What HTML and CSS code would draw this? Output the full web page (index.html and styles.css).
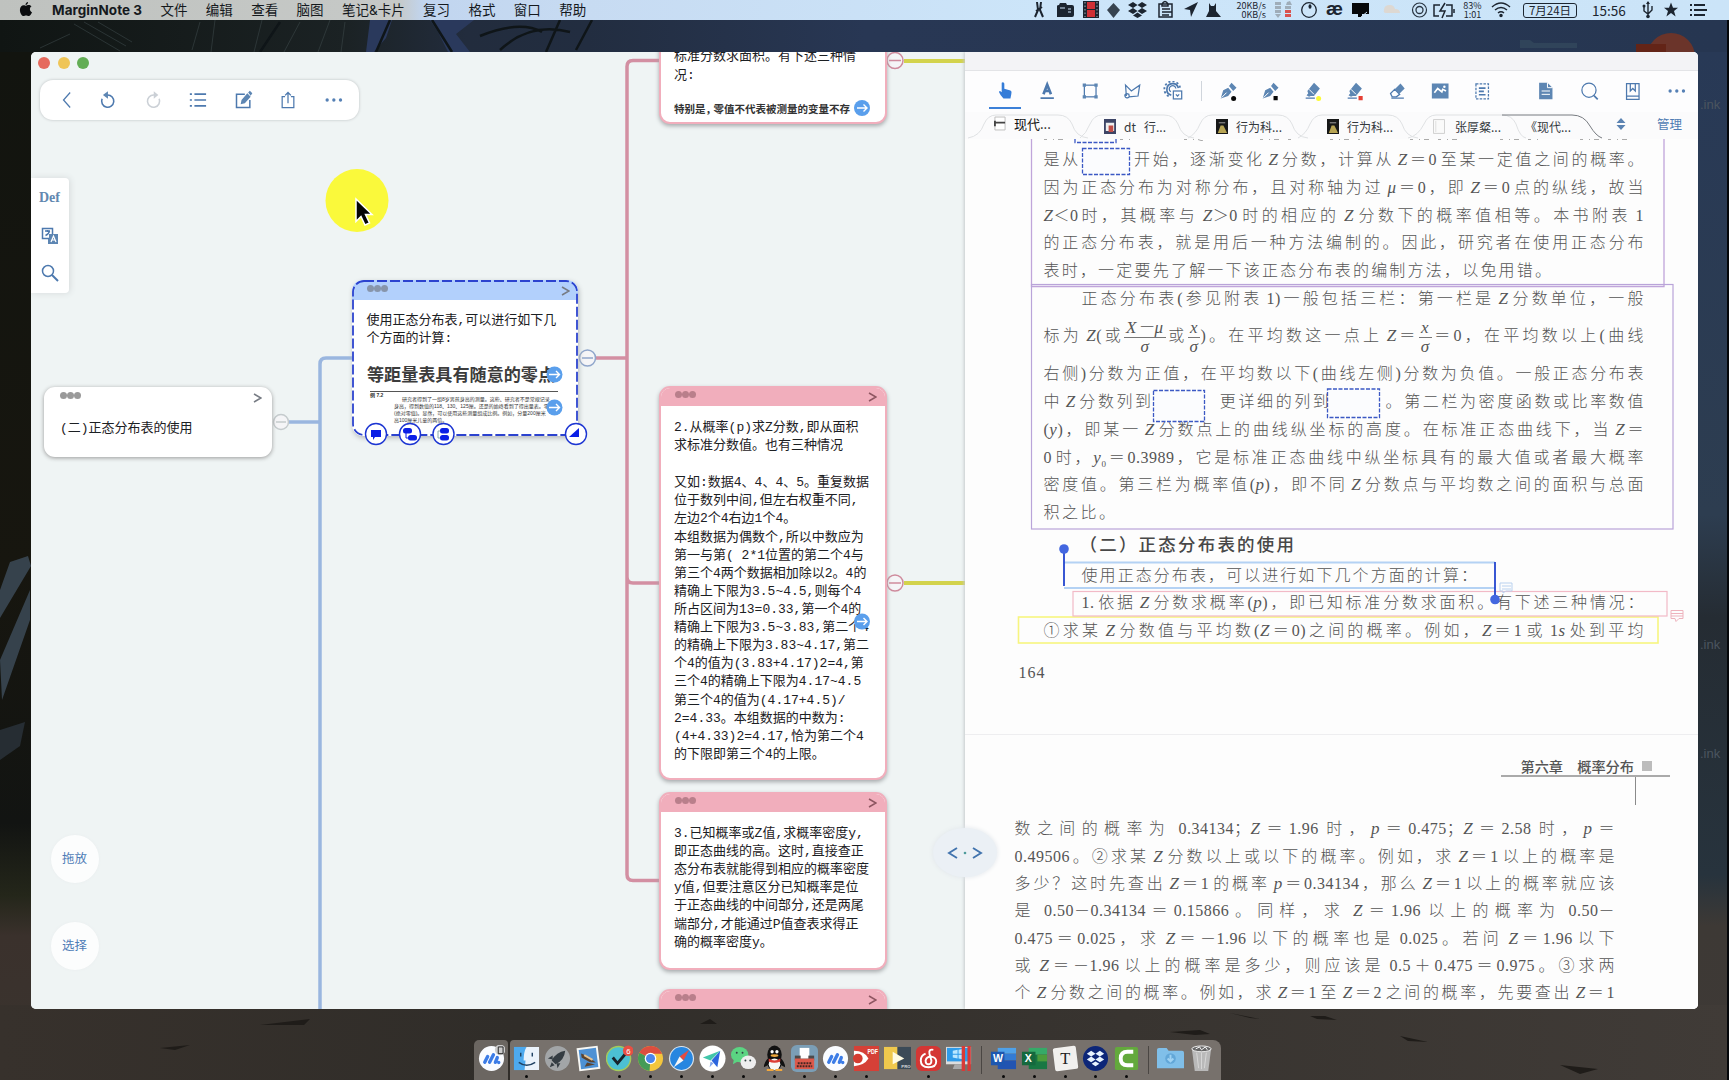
FILE: index.html
```html
<!DOCTYPE html>
<html lang="zh-CN">
<head>
<meta charset="utf-8">
<title>MarginNote 3</title>
<link rel="stylesheet" href="styles.css">
</head>
<body>
<div class="desktop">
<svg class="wallpaper" viewBox="0 0 1729 1080" aria-hidden="true">
  <defs>
    <linearGradient id="sky" x1="0" x2="1"><stop offset="0" stop-color="#101513"/><stop offset=".2" stop-color="#1b2224"/><stop offset=".27" stop-color="#222c3d"/><stop offset=".34" stop-color="#222d40"/><stop offset=".5" stop-color="#283754"/><stop offset="1" stop-color="#263651"/></linearGradient>
    <linearGradient id="side" x1="0" y1="0" x2="0" y2="1"><stop offset="0" stop-color="#283956"/><stop offset=".45" stop-color="#2d3d50"/><stop offset=".55" stop-color="#252c33"/><stop offset=".8" stop-color="#27333d"/><stop offset=".85" stop-color="#3d3935"/><stop offset="1" stop-color="#3e3936"/></linearGradient>
    <linearGradient id="leftside" x1="0" y1="0" x2="0" y2="1"><stop offset="0" stop-color="#12140f"/><stop offset=".5" stop-color="#17160f"/><stop offset=".75" stop-color="#121412"/><stop offset=".82" stop-color="#24261a"/><stop offset=".86" stop-color="#3a312c"/><stop offset="1" stop-color="#3a342f"/></linearGradient>
    <linearGradient id="sand" x1="0" x2="1"><stop offset="0" stop-color="#37312c"/><stop offset=".3" stop-color="#302d29"/><stop offset="1" stop-color="#403b37"/></linearGradient>
  </defs>
  <rect width="1729" height="540" fill="url(#sky)"/>
  <rect y="52" width="40" height="1028" fill="url(#leftside)"/>
  <rect x="1690" y="52" width="39" height="1028" fill="url(#side)"/>
  <rect y="1005" width="1729" height="75" fill="url(#sand)"/>
  <g stroke="#3b4647" stroke-width="1" fill="none" opacity=".6"><path d="M74 24l46 27M84 22l42 24M98 22l34 20M40 48l30-14M200 22l-8 28M215 20l-4 32M262 20l-8 32M300 22l-16 30M330 20l-12 32M345 22l-4 30"/></g>
  <g fill="#2a395c"><path d="M370 20h22l-6 18-12 14h-8zM430 20h44l-18 14 14 18h-22l-10-20z"/></g>
  <g stroke="#0f1518" stroke-width="2.500" fill="none"><path d="M432 20l20 32M480 36q40-16 62-4M500 50q30-28 70-18M560 20l-14 32M390 20l-14 32M280 22l-20 30M592 20l-16 30"/></g>
  <path d="M0 590l10-28 18-6 3 10-31 52zM0 660l30-70v30L2 700z" fill="#36424c"/>
  <path d="M0 730l25-8-5 24-20 14z" fill="#262d33"/>
  <path d="M1520 40h10l4 3h43v5h-57z" fill="#30445a"/>
  <circle cx="1671" cy="57" r="24" fill="#6b342a"/><path d="M1636 44h30v10h-30z" fill="#632417"/>
  <g fill="#1f1c19"><path d="M700 1024l10-5 7 5zM1170 1032l30-2 10 4-15 1zM1310 1016h15l12 4-20-1zM1400 1036l28 6-20-1zM1560 1065l38 4-18 5zM160 1048l30-3-15 5zM1250 1018l-20-5 30 6zM260 1025l50-6-6 6z"/></g>
  <path d="M1728 0v1080" stroke="#05070a" stroke-width="2"/>
</svg>
<div class="disk disk-a">.ink</div><div class="disk disk-b">.ink</div><div class="disk disk-c">.ink</div>

<header class="menubar">
  <svg class="apple" viewBox="0 0 14 16"><path fill="#0b0d0f" d="M9.200 0c.1 1.500-1.200 3.200-2.700 3.200C6.300 1.700 7.700.2 9.200 0zM7 4c.8 0 1.700-.8 3-.7 1.200 0 2.200.6 2.800 1.500-2.500 1.500-2 5 .6 6-.6 1.800-2 4.200-3.500 4.200-1.100 0-1.500-.7-2.800-.7s-1.800.7-2.800.7C2.500 15 .5 11.500.5 8.500.5 5.300 2.500 3.400 4.500 3.400 5.600 3.400 6.400 4 7 4z"/></svg>
  <nav class="menus"><b>MarginNote 3</b><span>文件</span><span>编辑</span><span>查看</span><span>脑图</span><span>笔记&amp;卡片</span><span>复习</span><span>格式</span><span>窗口</span><span>帮助</span></nav>
  <div class="status">
    <svg class="tray-a" viewBox="1026 0 206 20" fill="#1c2530">
      <path d="M1037 2l1 8-3 7M1041 2l-1 8 3 7M1036 11l6-4" fill="none" stroke="#1c2530" stroke-width="2"/>
      <path d="M1057 6q0-1 2-1l1-2h6l1 2h5q2 0 2 2v8q0 2-2 2h-15z"/><path d="M1060 8h5M1068 9h3M1068 12h3" stroke="#cde3f7" stroke-width="1.200"/>
      <path d="M1083 1h16v17h-16z"/><path d="M1087 2h8v7h-8zM1087 10h8v7h-8z" fill="#cf3137"/><path d="M1085 2v15M1097 2v15" stroke="#8b98a4" stroke-width="1.200" stroke-dasharray="1.500 2"/>
      <path d="M1113.500 3l6.500 7-6.500 8-6.500-8z" fill="#37434f"/>
      <path d="M1133 2l4.500 3-4.500 3-5-3zM1142 2l5 3-5 3-4.500-3zM1133 8l4.500 3-4.500 3-5-3zM1142 8l5 3-5 3-4.500-3zM1137.500 12.500l4.500 3-4.500 2.500-4.500-2.500z"/>
      <path d="M1159 4h13v13h-13zM1162 4q3-5 6 0v2h-6zM1162 9h8M1162 12h10M1162 15h7" fill="none" stroke="#1c2530" stroke-width="1.500"/>
      <path d="M1198 2l-14 7 6 1 1 7z"/><path d="M1206 17l3-6v-8l2 3h3l2-3v8l5 6z"/>
    </svg>
    <div class="speed"><span>20KB/s</span><span>0KB/s</span></div>
    <svg class="tray-b" viewBox="1269 0 193 20" fill="#1c2530">
      <g fill="#9fadb9"><path d="M1275 2h6v3h-6zM1275 6h6v3h-6zM1275 10h6v3h-6zM1275 14h6l-3 4zM1287 2l3-1 2 4h-6zM1285 6h6v3h-6z"/></g><path d="M1285 10h6v3h-6zM1285 14h6v3h-6z" fill="#d9534e"/>
      <circle cx="1309" cy="10" r="7.300" fill="none" stroke="#1c2530" stroke-width="1.300"/><ellipse cx="1310" cy="6.500" rx="1.500" ry="2.200"/>
      <text x="1326" y="15" font-family="Liberation Sans" font-weight="bold" font-size="18" textLength="17" lengthAdjust="spacingAndGlyphs">æ</text>
      <path d="M1352 3h17v11h-7v3h-4v-3h-6z" fill="#06080a"/><path d="M1361 17l6-5" stroke="#cde3f7"/>
      <path d="M1384 10q0-5 6-5 4 0 5 4 5 0 5 4h-14q-3 0-2-3z" fill="#ddd8d2"/>
      <circle cx="1419.500" cy="10" r="7" fill="none" stroke="#293542" stroke-width="1.200"/><circle cx="1419.500" cy="10" r="3.500" fill="none" stroke="#293542" stroke-width="1.300"/>
      <path d="M1440 5h-6v11h5M1446 5h6v11h-6M1454 9v4M1445 3l-5 8h5l-3 7" fill="none" stroke="#1c2530" stroke-width="1.500"/>
    </svg>
    <div class="battery"><span>83%</span><span>1:01</span></div>
    <svg class="wifi" viewBox="0 0 20 16" fill="none" stroke="#1c2530" stroke-width="1.500"><path d="M1 5q9-8 18 0M4 8q6-5 12 0M7 11q3-2.500 6 0"/><circle cx="10" cy="13.500" r="1" fill="#1c2530"/></svg>
    <div class="date">7月24日</div><div class="clock">15:56</div>
    <svg class="tray-c" viewBox="1636 0 80 20" fill="#1c2530"><path d="M1648 2v15M1644 6v5l4 3 4-4v-4" fill="none" stroke="#1c2530" stroke-width="1.400"/><circle cx="1648" cy="16.500" r="1.800"/><circle cx="1644" cy="6" r="1.500"/><path d="M1646 4l2-3 2 3zM1671 2.500l2 5.200h5l-4 3.300 1.600 5.500-4.600-3.400-4.600 3.400 1.600-5.500-4-3.300h5z"/><path d="M1690 5h2M1690 10h2M1690 15h2M1694 5h11M1694 10h13M1694 15h11" stroke="#1c2530" stroke-width="2"/></svg>
  </div>
</header>

<main class="window">
<section class="mindmap">
  <svg class="links" viewBox="31 52 934 957" fill="none">
    <path d="M289 422h31M352 358h-26q-6 0-6 6v645" stroke="#9ab6df" stroke-width="3.500"/>
    <path d="M596 358h31M660 60.500h-27q-6 0-6 6v808q0 6 6 6h27M627 577q0 6 6 6h27" stroke="#d38fa2" stroke-width="3.500"/>
    <path d="M904 61h61M904 583h61" stroke="#d3d34c" stroke-width="4"/>
    <g fill="#f5f5f7" stroke-width="1.500"><g stroke="#c5cbcd"><circle cx="281" cy="422" r="7.500"/><path d="M276 422h10"/></g><g stroke="#90a6cb"><circle cx="587.500" cy="358" r="8"/><path d="M582 358h11"/></g><g stroke="#cf8b9d"><circle cx="895" cy="60.500" r="8"/><path d="M889 60.500h12"/><circle cx="895" cy="583" r="8"/><path d="M889 583h12"/></g></g>
  </svg>

  <article class="card root"><div class="card-head"><i></i><svg viewBox="0 0 9 10"><path d="M1 1l7 4-7 4"/></svg></div><div class="card-text"><p>(二)正态分布表的使用</p></div></article>

  <article class="card selected"><div class="card-head"><i></i><svg viewBox="0 0 9 10"><path d="M1 1l7 4-7 4"/></svg></div>
    <div class="card-text"><p>使用正态分布表,可以进行如下几</p><p>个方面的计算:</p></div>
    <div class="clip-title">等距量表具有随意的零点</div>
    <div class="clip-small"><b>例 7.2</b><p>研究者得到了一组8岁男孩身高的测量。这些、研究者不是常规记录</p><p>身高，得到数值的118、130、125厘。还是的始终看到了得出量表。零</p><p>(绝对零值)。显然，可以使用这些测量组成比例。例如，分量200厘米</p><p>高100厘米儿童的两倍。</p></div>
    <svg class="outline" viewBox="0 0 226 156"><rect x="1" y="1" width="224" height="154" rx="11"/></svg>
  </article>

  <article class="card pink c1"><div class="card-head"><i></i></div><div class="card-text"><p>标准分数求面积。有下述三种情</p><p>况:</p></div><div class="clip-line">特别是<span>，</span>零值不代表被测量的变量不存</div></article>

  <article class="card pink c2"><div class="card-head"><i></i><svg viewBox="0 0 9 10"><path d="M1 1l7 4-7 4"/></svg></div><div class="card-text">
    <p>2.从概率(p)求Z分数,即从面积</p><p>求标准分数值。也有三种情况</p><p class="blank"></p>
    <p>又如:数据4、4、4、5。重复数据</p><p>位于数列中间,但左右权重不同,</p><p>左边2个4右边1个4。</p><p>本组数据为偶数个,所以中数应为</p><p>第一与第( 2*1位置的第二个4与</p><p>第三个4两个数据相加除以2。4的</p><p>精确上下限为3.5~4.5,则每个4</p><p>所占区间为13=0.33,第一个4的</p><p>精确上下限为3.5~3.83,第二个4</p><p>的精确上下限为3.83~4.17,第二</p><p>个4的值为(3.83+4.17)2=4,第</p><p>三个4的精确上下限为4.17~4.5</p><p>第三个4的值为(4.17+4.5)/</p><p>2=4.33。本组数据的中数为:</p><p>(4+4.33)2=4.17,恰为第二个4</p><p>的下限即第三个4的上限。</p></div></article>

  <article class="card pink c3"><div class="card-head"><i></i><svg viewBox="0 0 9 10"><path d="M1 1l7 4-7 4"/></svg></div><div class="card-text"><p>3.已知概率或Z值,求概率密度y,</p><p>即正态曲线的高。这时,直接查正</p><p>态分布表就能得到相应的概率密度</p><p>y值,但要注意区分已知概率是位</p><p>于正态曲线的中间部分,还是两尾</p><p>端部分,才能通过P值查表求得正</p><p>确的概率密度y。</p></div></article>

  <article class="card pink c4"><div class="card-head"><i></i><svg viewBox="0 0 9 10"><path d="M1 1l7 4-7 4"/></svg></div></article>

  <svg class="links" viewBox="31 52 934 957">
    <g fill="#5a9fec"><circle cx="554.500" cy="374.500" r="8"/><circle cx="554.500" cy="407.500" r="8"/><circle cx="862" cy="108" r="8"/><circle cx="862" cy="621.500" r="8"/></g>
    <path d="M549 374.500h10M556 371l3.500 3.500-3.500 3.500M549 407.500h10M556 404l3.500 3.500-3.500 3.500M857 108h10M863.500 104.500l3.500 3.500-3.500 3.500M857 621.500h10M863.500 618l3.500 3.500-3.500 3.500" fill="none" stroke="#fff" stroke-width="1.400"/>
    <g fill="#fff" stroke="#1c35d2" stroke-width="1.400"><circle cx="376" cy="434" r="10.500"/><circle cx="410" cy="434" r="10.500"/><circle cx="443.500" cy="434" r="10.500"/><circle cx="576" cy="434" r="10.500"/></g>
    <g fill="#0b1fe6"><path d="M371 430h10v7h-6l-2 3v-3h-2z"/><rect x="403" y="428" width="9" height="5.500" rx="2.500"/><rect x="408" y="435" width="9" height="5.500" rx="2.500"/><path d="M406 433v5h4" fill="none" stroke="#0b1fe6"/><rect x="440" y="428" width="9" height="5.500" rx="2.500"/><rect x="440" y="435" width="9" height="5.500" rx="2.500"/><path d="M440 431h-2v7h2" fill="none" stroke="#8aa"/><path d="M579 428v9h-10z"/></g>
    <circle cx="357" cy="200.500" r="31.500" fill="#faf93b"/>
    <path d="M356 199v22.500l5-5 4 8.500 4.500-2-4-8.500h6.500z" fill="#050505" stroke="#fff" stroke-width="1.500"/>
  </svg>

  <div class="lights"><i></i><i></i><i></i></div>
  <div class="pill">
    <svg viewBox="0 0 24 24"><path d="M17 3L9 12l8 9"/></svg>
    <svg viewBox="0 0 24 24"><path d="M2.500 10.500a7.300 7.300 0 1 0 6.500-4.500H6" stroke-width="1.900"/><path d="M9.500 1.500v9L3.500 6z" class="solid"/></svg>
    <svg viewBox="0 0 24 24" class="off"><path d="M17 10.500A7.300 7.300 0 1 1 10.500 6h3" stroke-width="1.900"/><path d="M10.500 1.500v9L16 6z" class="solid"/></svg>
    <svg viewBox="0 0 24 24"><path d="M6.500 5h14M6.500 12h14M6.500 19h14M1 5h2.500M1 12h2.500M1 19h2.500" stroke-width="2"/></svg>
    <svg viewBox="0 0 24 24"><path d="M13 5H3v16h16v-9" stroke-width="1.800"/><path d="M8 17l1-5 7-8 4 4-7 8zM17 3l2-2 3 3-2 3z" class="solid"/></svg>
    <svg viewBox="0 0 24 24"><path d="M8.500 8H5v13h14V8h-3.500M12 16V3M8.500 6.500L12 3l3.500 3.500"/></svg>
    <svg viewBox="0 0 24 24"><g class="dots"><circle cx="5" cy="12" r="2"/><circle cx="13" cy="12" r="2"/><circle cx="21" cy="12" r="2"/></g></svg>
  </div>
  <aside class="tools"><b>Def</b>
    <svg viewBox="0 0 18 18"><rect x="1.500" y="1.500" width="10" height="10"/><path d="M4 4h5M6.500 3v2M4.500 8.500Q8 7 8.500 4"/><path d="M8 7h9v10H7v-5h1z" class="solid"/><path d="M10 15l2.500-6 2.500 6M11 13h3" class="knock"/></svg>
    <svg viewBox="0 0 18 18"><circle cx="7" cy="7" r="5.500"/><path d="M11 11l6 6" stroke-width="2"/></svg>
  </aside>
  <div class="round-actions"><span>拖放</span><span>选择</span></div>
</section>

<section class="reader">
  <div class="strip"></div>
  <div class="toolbar">
    <div class="group">
      <svg class="active" viewBox="0 0 24 24"><path class="solid" d="M8 3q2-1 3 1v6l7 2q2 1 1 4l-1 5h-8q-4-4-5-7 0-2 2-1l1 1z"/></svg>
      <svg viewBox="0 0 24 24"><path d="M7.500 16L12 4.500 16.500 16M9 12h6" stroke-width="3.200"/><path d="M4 20.500h16" stroke-width="2"/></svg>
      <svg viewBox="0 0 24 24"><rect x="5" y="5" width="14" height="14"/><path class="solid" d="M3 3h4v4H3zM17 3h4v4h-4zM3 17h4v4H3zM17 17h4v4h-4z"/></svg>
      <svg viewBox="0 0 24 24"><path d="M5 18L4 5l7 7 10-7-2 13-11 1M5 15a2.500 2.500 0 1 0 2 5q2 0 1-4z"/></svg>
      <svg viewBox="0 0 24 24"><path d="M17 8.500A7 7 0 1 0 8.500 17" stroke-width="2"/><path d="M19 8A9.500 9.500 0 1 0 7 19" stroke-width="2.200" stroke-dasharray="2.500 2.500"/><path d="M14 9a4 4 0 1 0-6 4"/><rect x="11" y="12" width="10" height="9.500"/><path d="M14 16l2 2 2-2"/></svg>
    </div>
    <div class="group pens">
      <svg viewBox="0 0 24 24"><path class="solid" d="M3 21L6 11l6-3 4 5-4 5zM13 6l3-4 6 6-4 4z"/><path class="knock" d="M4 20l6-6"/><circle cx="18.500" cy="21" r="3" fill="#080808" stroke="none"/></svg>
      <svg viewBox="0 0 24 24"><path class="solid" d="M3 21L6 11l6-3 4 5-4 5zM13 6l3-4 6 6-4 4z"/><path class="knock" d="M4 20l6-6"/><path fill="#080808" stroke="none" d="M16 18h5v5h-5z"/></svg>
      <svg viewBox="0 0 24 24"><path class="solid" d="M5 12l8-10 7 7-7 9H9l-2 1-3-2 2-2z"/><path class="knock" d="M7 10l6 6"/><path d="M3 20.500h11"/><circle cx="18.500" cy="21" r="3" fill="#fbfa37" stroke="none"/></svg>
      <svg viewBox="0 0 24 24"><path class="solid" d="M5 12l8-10 7 7-7 9H9l-2 1-3-2 2-2z"/><path class="knock" d="M7 10l6 6"/><path d="M3 20.500h11"/><path fill="#e64035" stroke="none" d="M16 18h5v5h-5z"/></svg>
      <svg viewBox="0 0 24 24"><path d="M4 15l5-5 6 6-4 3H6z"/><path class="solid" d="M9 10l7-7 5 6-7 7z"/><path d="M5 20.500h15"/></svg>
      <svg viewBox="0 0 24 24"><path class="solid" d="M2 3h20v18H2z"/><path d="M5 14l4-5 5 4 1-3 4 2" stroke="#fff" stroke-width="2"/><circle cx="17" cy="7" r="1.500" fill="#fff" stroke="none"/></svg>
      <svg viewBox="0 0 24 24"><rect x="4.500" y="3.500" width="15" height="18" stroke-dasharray="3 1.500"/><path d="M8 8.500h8M8 12.500h6M8 16.500h8" stroke-width="2"/></svg>
    </div>
    <div class="group views">
      <svg viewBox="0 0 24 24"><path class="solid" d="M4 2h10l6 6v14H4z"/><path class="knock" d="M14 2v6h6M7 12h10M7 16h10"/></svg>
      <svg viewBox="0 0 24 24"><circle cx="11" cy="11" r="8.500"/><path d="M17 17.500L21.500 22" stroke-width="2"/></svg>
      <svg viewBox="0 0 24 24"><path d="M4.500 3h15v19h-15zM4.500 18h15M9 3v9l3-3 3 3V3"/></svg>
      <svg viewBox="0 0 24 24"><g class="dots"><circle cx="4" cy="12" r="2"/><circle cx="12" cy="12" r="2"/><circle cx="20" cy="12" r="2"/></g></svg>
    </div>
  </div>
  <div class="tabs">
    <svg class="tab-lines" viewBox="965 112 733 27" fill="none" stroke="#dfe1e3" stroke-width="1"><path d="M968 138q12-2 16-14 4-9 12-9h62q10 0 14 9 4 13 16 14M1080 138q6-4 10-14 4-9 12-9h62q10 0 14 9 4 13 16 14M1188 138q8-4 12-14 4-9 12-9h66q10 0 14 9 4 13 16 14M1298 138q8-4 12-14 4-9 12-9h66q10 0 14 9 4 13 16 14M1408 138q10-2 16-14 4-9 12-9h66q10 0 14 9 4 13 10 14"/><path d="M1502 115h70q12 0 18 11 6 10 12 12" stroke="#777b80"/></svg>
    <div class="tab first"><svg viewBox="0 0 13 16"><path d="M1 1h11v14H1z" fill="#fff" stroke="#bbb"/><path d="M0 7h12M1 5v6" stroke="#444" stroke-width="2"/></svg>现代...</div>
    <div class="tab t2"><svg viewBox="0 0 13 16"><path d="M0 0h13v16H0z" fill="#3d4566"/><path d="M2 4h9v9H2z" fill="#eee"/><path d="M5 7h5v7H5z" fill="#c04d47"/></svg>dt&nbsp;&nbsp; 行...</div>
    <div class="tab t3"><svg viewBox="0 0 13 16"><path d="M0 0h13v16H0z" fill="#171818"/><path d="M2 15l3-8h3l4 8z" fill="#b7a453"/><path d="M3 4h7" stroke="#aaa"/></svg>行为科...</div>
    <div class="tab t4"><svg viewBox="0 0 13 16"><path d="M0 0h13v16H0z" fill="#171818"/><path d="M2 15l3-8h3l4 8z" fill="#b7a453"/><path d="M3 4h7" stroke="#aaa"/></svg>行为科...</div>
    <div class="tab t5"><svg viewBox="0 0 13 16"><path d="M.5.5h12v15H.5z" fill="#fafafa" stroke="#ccc"/><path d="M3 2v12" stroke="#ddd"/></svg>张厚粲...</div>
    <div class="tab t6">《现代...</div>
    <svg class="sort" viewBox="0 0 10 12"><path d="M5 0l4.500 5h-9zM5 12L.5 7h9z" fill="#5b83b2"/></svg>
    <span class="manage">管理</span>
  </div>
  <div class="document">
    <div class="page p1">
      <p class="l">是从<s></s>开始，逐渐变化 <i>Z</i> 分数，计算从 <i>Z</i>＝0 至某一定值之间的概率。</p>
      <p class="l">因为正态分布为对称分布，且对称轴为过 <i>μ</i>＝0，即 <i>Z</i>＝0 点的纵线，故当</p>
      <p class="l"><i>Z</i>＜0时，其概率与 <i>Z</i>＞0 时的相应的 <i>Z</i> 分数下的概率值相等。本书附表 1</p>
      <p class="l">的正态分布表，就是用后一种方法编制的。因此，研究者在使用正态分布</p>
      <p class="l w506">表时，一定要先了解一下该正态分布表的编制方法，以免用错。</p>
      <p class="l indent">正态分布表(参见附表 1)一般包括三栏：第一栏是 <i>Z</i> 分数单位，一般</p>
      <p class="l formula">标为 <i>Z</i>(或<span class="frac"><i>X－μ</i><i>σ</i></span>或<span class="frac"><i>x</i><i>σ</i></span>)。在平均数这一点上 <i>Z</i>＝<span class="frac"><i>x</i><i>σ</i></span>＝0，在平均数以上(曲线</p>
      <p class="l after">右侧)分数为正值，在平均数以下(曲线左侧)分数为负值。一般正态分布表</p>
      <p class="l">中 <i>Z</i> 分数列到<s class="gap-a"></s>更详细的列到<s class="gap-b"></s>。第二栏为密度函数或比率数值</p>
      <p class="l">(<i>y</i>)，即某一 <i>Z</i> 分数点上的曲线纵坐标的高度。在标准正态曲线下，当 <i>Z</i>＝</p>
      <p class="l">0 时，<i>y</i><sub>0</sub>＝0.3989，它是标准正态曲线中纵坐标具有的最大值或者最大概率</p>
      <p class="l">密度值。第三栏为概率值(<i>p</i>)，即不同 <i>Z</i> 分数点与平均数之间的面积与总面</p>
      <p class="l short">积之比。</p>
      <h2>（二）正态分布表的使用</h2>
      <p class="l indent w394">使用正态分布表，可以进行如下几个方面的计算：</p>
      <p class="l indent">1. 依据 <i>Z</i> 分数求概率(<i>p</i>)，即已知标准分数求面积。有下述三种情况：</p>
      <p class="l">①求某 <i>Z</i> 分数值与平均数(<i>Z</i>＝0)之间的概率。例如，<i>Z</i>＝1 或 1<i>s</i> 处到平均</p>
      <div class="folio">164</div>
    </div>
    <div class="page p2">
      <div class="chapter"><span>第六章　概率分布</span><i></i></div>
      <p class="l">数之间的概率为 0.34134；<i>Z</i>＝1.96 时，<i>p</i>＝0.475；<i>Z</i>＝2.58 时，<i>p</i>＝</p>
      <p class="l">0.49506。②求某 <i>Z</i> 分数以上或以下的概率。例如，求 <i>Z</i>＝1 以上的概率是</p>
      <p class="l">多少？这时先查出 <i>Z</i>＝1 的概率 <i>p</i>＝0.34134，那么 <i>Z</i>＝1 以上的概率就应该</p>
      <p class="l">是 0.50－0.34134＝0.15866。同样，求 <i>Z</i>＝1.96 以上的概率为 0.50－</p>
      <p class="l">0.475＝0.025，求 <i>Z</i>＝－1.96 以下的概率也是 0.025。若问 <i>Z</i>＝1.96 以下</p>
      <p class="l">或 <i>Z</i>＝－1.96 以上的概率是多少，则应该是 0.5＋0.475＝0.975。③求两</p>
      <p class="l">个 <i>Z</i> 分数之间的概率。例如，求 <i>Z</i>＝1 至 <i>Z</i>＝2 之间的概率，先要查出 <i>Z</i>＝1</p>
    </div>
    <svg class="marks" viewBox="965 139 733 870" fill="none">
      <path d="M1044 139.500h26M1120 139.500h10M1184 139.500h14l3 1h8M1260 139.500h34M1330 139.500h30M1410 139.500h50M1500 139.500h40M1580 139.500h50" stroke="#aaa" stroke-dasharray="3 6 1 4 5 9"/>
      <path d="M1031.500 139v147.500H1664V139" stroke="#c0a5da" stroke-width="1.300"/><rect x="1031.500" y="284.500" width="641.500" height="244.500" stroke="#b9a4d9" stroke-width="1.200"/>
      <g stroke="#3b58c4" stroke-width="1.300" stroke-dasharray="4 1.500" fill="#fbfcfe"><path d="M1075 139v3.500h41V139"/><rect x="1082.500" y="148.500" width="47" height="26"/><rect x="1153.500" y="390.500" width="51" height="31"/><rect x="1327.500" y="389" width="52" height="28.500"/></g>
      <rect x="1018.500" y="617" width="639.500" height="26" stroke="#f7f57f" stroke-width="1.600"/><rect x="1073" y="591.500" width="594" height="24.500" stroke="#f2bac7" stroke-width="1.200"/>
      <path d="M1064 562.500h431M1064 588h431" stroke="#b4d2f4" stroke-width="2.200"/><path d="M1064 549v37M1495 562v37" stroke="#2445cf" stroke-width="1.800"/><circle cx="1064" cy="549" r="4.800" fill="#4367e0"/><circle cx="1495" cy="599.500" r="4.800" fill="#4367e0"/>
      <path d="M1500 583h12v8h-6l-3 2v-2h-3zM1502 586h9M1502 589h9" stroke="#b9d1ef"/><path d="M1671 610.500h12v8h-4l-3 3-1-3h-4zM1671 613.500h12M1671 616h12" stroke="#eeb3bd"/>
    </svg>
  </div>
</section>
<div class="handle"><svg viewBox="0 0 36 14"><path d="M10 2L2 7l8 5M26 2l8 5-8 5"/><circle cx="18" cy="7" r="1.300"/></svg></div>
</main>

<footer class="dock">
  <div class="dock-part solo"><div class="app quiet"><svg viewBox="0 0 28 28"><circle cx="14" cy="14" r="13" fill="#fafcff"/><path d="M7 18l3-6M12 18l4-8M18 18l2-5M21.500 18v.1" stroke="#3c7ce6" stroke-width="3.500" stroke-linecap="round"/><circle cx="23" cy="5" r="5.500" fill="#ccc"/><path d="M21 2h5v7h-5z" fill="none" stroke="#222"/></svg></div></div>
  <div class="dock-part">
    <div class="app"><svg viewBox="0 0 28 28"><path d="M1 2h13v24H1z" fill="#4da9ee"/><path d="M14 2h13v24H12l1-10h-2q0-9 3-14z" fill="#eaf2fb"/><path d="M8 8v4M20 8v4M6 18q8 6 17 0" fill="none" stroke="#204264" stroke-width="1.500"/></svg></div>
    <div class="app quiet"><svg viewBox="0 0 28 28"><circle cx="14" cy="14" r="13" fill="#a2a5a7"/><path d="M22 6q-9 1-14 10l4 4q9-4 10-14zM9 11l-5 3 5 1zM17 19l-3 5-1-5zM8 18l-2 5 5-2z" fill="#343c42"/></svg></div>
    <div class="app"><svg viewBox="0 0 28 28"><g transform="rotate(-7 14 14)"><path d="M3 2h22v24H3z" fill="#f7f7f4"/><path d="M5 4h18v20H5z" fill="#4e91d4"/><path d="M7 8l7 4 7 7-6-1-8-6zM12 18l8 3-11 1z" fill="#5b432f"/><path d="M10 10l8 6" stroke="#e4c293" stroke-width="2"/></g></svg></div>
    <div class="app"><svg viewBox="0 0 28 28"><circle cx="13" cy="14" r="12.500" fill="#4cc0d3" stroke="#a4ca59" stroke-width="1.500"/><path d="M7 13l5 6 9-11" fill="none" stroke="#18242c" stroke-width="3"/><circle cx="23" cy="6" r="5.500" fill="#e84f43"/><text x="21" y="9" font-size="8" fill="#fff" font-family="Liberation Sans">6</text></svg></div>
    <div class="app"><svg viewBox="0 0 28 28"><circle cx="14" cy="14" r="13" fill="#f4c63d"/><path d="M14 14L2.500 8A13 13 0 0 1 26 9H14z" fill="#dd4e3f"/><path d="M14 14l-1 13A13 13 0 0 1 2.500 8z" fill="#459b57"/><circle cx="14" cy="14" r="6" fill="#fff"/><circle cx="14" cy="14" r="4.700" fill="#4c86eb"/></svg></div>
    <div class="app"><svg viewBox="0 0 28 28"><circle cx="14" cy="14" r="13" fill="#dce6ef"/><circle cx="14" cy="14" r="11.800" fill="#2786e0"/><path d="M22 5l-6 11-4-4z" fill="#e44b42"/><path d="M6 23l6-11 4 4z" fill="#f7f7f7"/></svg></div>
    <div class="app"><svg viewBox="0 0 28 28"><circle cx="14" cy="14" r="13.500" fill="#fff"/><path d="M22 6L4 13l8 3z" fill="#41c6aa"/><path d="M22 6l-9 10 6 7z" fill="#2b65dd"/><path d="M12 17l-1 6 4-4z" fill="#83a6eb"/></svg></div>
    <div class="app"><svg viewBox="0 0 28 28"><ellipse cx="10" cy="10" rx="9" ry="8" fill="#5bd482"/><path d="M4 15l-1 5 5-3z" fill="#5bd482"/><ellipse cx="19" cy="18" rx="8" ry="7" fill="#eee"/><path d="M7 8v.1M13 8v.1M16 16v.1M21 16v.1" stroke="#344" stroke-width="2" stroke-linecap="round"/></svg></div>
    <div class="app"><svg viewBox="0 0 28 28"><ellipse cx="14" cy="10" rx="7.500" ry="9.500" fill="#111"/><path d="M8 13q-5 5-5 10l4-2q1 5 7 5t7-5l4 2q0-5-5-10z" fill="#111"/><ellipse cx="14" cy="20" rx="6" ry="6" fill="#f7f7f5"/><path d="M8 14q6 4 12 0v3q-6 3-12 0z" fill="#dc3d35"/><ellipse cx="14" cy="11" rx="4" ry="1.500" fill="#eda73d"/><circle cx="11.500" cy="7" r="1.700" fill="#fff"/><circle cx="16.500" cy="7" r="1.700" fill="#fff"/><path d="M6 26h7M15 26h7" stroke="#f2a83d" stroke-width="2"/></svg></div>
    <div class="app"><svg viewBox="0 0 28 28"><rect width="28" height="28" rx="6" fill="#7b9eb6"/><path d="M9 3h10v11H9z" fill="#fff"/><path d="M4 11h20v5H4z" fill="#4c4a4b"/><path d="M4 14h20v11H4z" fill="#dc594b"/><path d="M10 8h8v6h-8z" fill="#fff"/><path d="M7 19h14M6 22h16" stroke="#442522" stroke-width="2" stroke-dasharray="2 1"/></svg></div>
    <div class="app"><svg viewBox="0 0 28 28"><circle cx="14" cy="14" r="13" fill="#fafcff"/><path d="M7 18l3-6M12 18l4-8M18 18l2-5M21.500 18v.1" stroke="#3c7ce6" stroke-width="3.500" stroke-linecap="round"/></svg></div>
    <div class="app"><svg viewBox="0 0 28 28"><path d="M1 1h26v26H1z" fill="#d54037"/><path d="M1 6q11 0 15 8-4 7-15 8z" fill="#fff"/><circle cx="5" cy="14" r="5" fill="#d53c31"/><text x="15" y="9" font-size="7" font-weight="bold" fill="#fff" font-family="Liberation Sans" textLength="11" lengthAdjust="spacingAndGlyphs">PDF</text></svg></div>
    <div class="app quiet"><svg viewBox="0 0 28 28"><path d="M0 2h14v23H0z" fill="#efc84d"/><path d="M14 2h14v23H14z" fill="#3b4a57"/><path d="M9 7v13l12-6z" fill="#fffbe3"/><text x="18" y="24" font-size="4.500" font-weight="bold" fill="#ddd" font-family="Liberation Sans">PRO</text></svg></div>
    <div class="app"><svg viewBox="0 0 28 28"><rect x="1" y="1" width="26" height="26" rx="6" fill="#d43634"/><path d="M19 5q-5-1-4 4l2 7q0 4-3 4t-3-4q1-4 6-4 5 1 5 5 0 6-8 6t-8-7q0-5 5-7" fill="none" stroke="#fff" stroke-width="2"/></svg></div>
    <div class="app quiet"><svg viewBox="0 0 28 28"><path d="M0 2h26v18H0z" fill="#ddd"/><path d="M1 3h24v14H1z" fill="#2f9be9"/><path d="M7 6l5-1v4H7zM13 5l6-1v5h-6zM7 10h5v4l-5-1zM13 10h6v5l-6-1z" fill="#bbe7ff"/><path d="M9 20h8v5H7z" fill="#aaa"/><path d="M18 1v26M24 1v26" stroke="#d83a37" stroke-width="3.500"/></svg></div>
    <div class="rule"></div>
    <div class="app"><svg viewBox="0 0 28 28"><path d="M8 3h19v6H8z" fill="#4fa1e9"/><path d="M8 9h19v7H8z" fill="#337bd4"/><path d="M8 16h19v9H8z" fill="#2254b1"/><path d="M1 7h14v14H1z" fill="#1d57b0"/><text x="3" y="18" font-size="11" font-weight="bold" fill="#fff" font-family="Liberation Sans">W</text></svg></div>
    <div class="app"><svg viewBox="0 0 28 28"><path d="M8 3h19v7H8z" fill="#36aa68"/><path d="M8 10h19v15H8z" fill="#197743"/><path d="M17 10h10v7H17z" fill="#4c9c3b"/><path d="M1 7h14v14H1z" fill="#15693e"/><text x="4" y="18" font-size="11" font-weight="bold" fill="#fff" font-family="Liberation Sans">X</text></svg></div>
    <div class="app"><svg viewBox="0 0 28 28"><rect x="2" y="2" width="24" height="24" rx="2" fill="#f1f0ee" transform="rotate(-7 14 14)"/><text x="8.500" y="20" font-size="17" fill="#222" font-family="Liberation Serif">T</text></svg></div>
    <div class="app"><svg viewBox="0 0 28 28"><circle cx="14" cy="14" r="13" fill="#0d2678"/><path d="M9.500 6l4.500 3-4.500 3L5 9zM18.500 6L23 9l-4.500 3L14 9zM9.500 12l4.500 3-4.500 3L5 15zM18.500 12l4.500 3-4.500 3-4.500-3zM14 17l4 2.500-4 2.500-4-2.500z" fill="#e9f4ff"/></svg></div>
    <div class="app"><svg viewBox="0 0 28 28"><rect x="2" y="2" width="24" height="24" rx="2" fill="#63a93c"/><path d="M21 7h-6q-7 0-7 7t7 7h6" fill="none" stroke="#fff" stroke-width="4"/></svg></div>
    <div class="rule"></div>
    <div class="app quiet"><svg viewBox="0 0 28 28"><path d="M0 5q0-2 2-2h8l2 3h14q2 0 2 2v16H0z" fill="#80bfe9"/><circle cx="14" cy="14" r="5.500" fill="#62a7d8"/><path d="M14 10v7M11 14l3 3 3-3" fill="none" stroke="#9fd2f3" stroke-width="2"/></svg></div>
    <div class="app quiet"><svg viewBox="0 0 28 28"><path d="M4 4h20l-3 23H7z" fill="#b9b9b9"/><path d="M9 8l2 16M14 8v17M19 8l-2 16" stroke="#d7d7d7"/><ellipse cx="14" cy="4" rx="10" ry="3" fill="#666" stroke="#eee"/><path d="M8 4l4-2 2 3 4-3 2 3" fill="none" stroke="#fff"/></svg></div>
  </div>
</footer>
</div>
</body>
</html>
```

FILE: styles.css
```css
* { box-sizing: border-box; }
body { margin: 0; font-family: "Liberation Sans", "Noto Sans CJK SC", sans-serif; color: #15191d; }
p, h2 { margin: 0; }
svg { display: block; flex: none; }
.desktop { position: relative; width: 1729px; height: 1080px; overflow: hidden; background: #1c2126; }
.wallpaper { position: absolute; inset: 0; width: 1729px; height: 1080px; }
.disk { position: absolute; left: 1700px; font-size: 13px; line-height: 16px; color: #4b555f; }
.disk-a { top: 97px; }
.disk-b { top: 637px; }
.disk-c { top: 746px; }

/* menu bar */
.menubar { position: relative; display: flex; height: 20px; padding-left: 19px; background: linear-gradient(90deg, #bfc2bf 0, #c6c9c7 23%, #c1d5ef 24.500%, #c7dbf2 34%, #cce5f9 60%, #cbe4f8 100%); }
.apple { width: 14px; height: 15px; margin-top: 2px; }
.menus { display: flex; gap: 18.400px; margin-left: 19px; font-family: Inter, "Noto Sans CJK SC", sans-serif; font-size: 13.500px; line-height: 20px; white-space: nowrap; }
.menus b { font-size: 13.500px; font-weight: 700; width: 90px; letter-spacing: .05px; }
.status { position: absolute; left: 1026px; top: 0; display: flex; height: 20px; align-items: center; color: #1c2530; font-family: "Noto Sans CJK SC", sans-serif; }
.tray-a { width: 206px; height: 20px; }
.tray-b { width: 193px; height: 20px; }
.tray-c { width: 80px; height: 20px; margin-left: 8px; }
.speed, .battery { display: flex; flex-direction: column; font-size: 9px; line-height: 9px; text-align: right; width: 34px; }
.speed { margin-right: 3px; }
.battery { width: 21px; font-size: 9px; text-align: center; }
.battery span { margin: 0 -2px; }
.wifi { width: 20px; height: 16px; margin: 0 12px 0 8px; }
.date { width: 54px; height: 15px; border: 1.500px solid #1c2530; border-radius: 3px; font-size: 11.500px; line-height: 12px; text-align: center; white-space: nowrap; }
.clock { width: 36px; margin-left: 15px; margin-right: 0; font-size: 13.500px; line-height: 18px; }

/* window */
.window { position: absolute; left: 31px; top: 52px; width: 1667px; height: 957px; display: flex; border-radius: 5px; overflow: hidden; background: #eff4f4; }
.mindmap { position: relative; width: 934px; flex: none; overflow: hidden; background: #eff4f4; }
.links { position: absolute; left: 0; top: 0; width: 934px; height: 957px; }
.lights { position: absolute; left: 7px; top: 4.500px; display: flex; gap: 7.500px; }
.lights i { width: 12px; height: 12px; border-radius: 50%; background: #e56a5d; }
.lights i:nth-child(2) { background: #efc557; }
.lights i:nth-child(3) { background: #63ad55; }
.pill { position: absolute; left: 9px; top: 28px; display: flex; align-items: center; width: 319px; height: 40px; padding-left: 15.500px; gap: 24.500px; border-radius: 13px; background: #fff; box-shadow: 0 0 3px #b9bdbf; }
.pill svg { width: 20px; height: 20px; }
.pill svg, .tools svg, .toolbar svg { fill: none; stroke: #4d79ae; stroke-width: 1.500; }
.pill .off { stroke: #cbd0d6; }
.pill .off .solid { fill: #cbd0d6; }
.solid { fill: #5d86b3; stroke: none; }
.dots { fill: #5580b5; stroke: none; }
.knock { fill: none; stroke: #fff; stroke-width: 1.200; }
.tools { position: absolute; left: 0; top: 126px; width: 38px; height: 115px; padding: 10px 1px 0 0; display: flex; flex-direction: column; align-items: center; gap: 19.500px; background: #fff; border-radius: 0 4px 4px 0; box-shadow: 1px 0 6px #d5d9da; }
.tools b { font: bold 14px/19px "Liberation Serif", serif; color: #6288b0; }
.tools svg { width: 18px; height: 18px; }
.round-actions { position: absolute; left: 19.500px; top: 783px; display: flex; flex-direction: column; gap: 39px; }
.round-actions span { width: 48px; height: 48px; border-radius: 50%; background: #fcfdfd; font-size: 12.500px; line-height: 49px; text-align: center; color: #4e7cb6; box-shadow: 0 0 3px #e9edee; }

/* mind-map cards */
.card { position: absolute; width: 228px; background: #fff; border: 2px solid #fff; border-radius: 11px; box-shadow: 0 2px 4px #a5a9ab; overflow: hidden; }
.card-head { position: relative; display: flex; justify-content: space-between; height: 18px; padding: 3px 8px 0 14px; }
.card-head i { width: 7px; height: 7px; border-radius: 50%; background: #9a9a9a; box-shadow: 7px 0 #9a9a9a, 14px 0 #9a9a9a; }
.card-head svg { width: 9px; height: 10px; fill: none; stroke: #777c84; stroke-width: 1.600; margin-top: 1px; }
.card-text { padding: 13px 0 0 13.500px; font-family: "Liberation Mono", "Noto Sans CJK SC", monospace; font-size: 13px; color: #1c2023; }
.card-text p { height: 18.120px; line-height: 18.120px; white-space: pre; }
.card-text .blank { height: 19px; }
.pink { left: 627.500px; border-color: #f1aebc; }
.pink .card-head { background: #f1aebc; }
.pink .card-head i { background: #b97f8b; box-shadow: 7px 0 #b97f8b, 14px 0 #b97f8b; }
.pink .card-head svg { stroke: #8e5661; }
.root { left: 12.500px; top: 335px; height: 70px; box-shadow: 0 1px 4px #999; }
.root .card-text { padding-left: 14.500px; }
.selected { left: 321px; top: 228px; width: 226px; height: 156px; padding: 0; border: 0; box-shadow: 1px 2px 5px #b5b9bb; }
.selected .card-head { height: 20px; padding: 5px 8px 0 15px; background: #b2d0fc; }
.selected .card-head i { background: #8795ab; box-shadow: 7px 0 #8795ab, 14px 0 #8795ab; }
.selected .card-text { padding: 12px 0 0 14.500px; }
.outline { position: absolute; inset: 0; width: 226px; height: 156px; fill: none; stroke: #2c43cf; stroke-width: 1.800; stroke-dasharray: 10 3; }
.clip-title { margin: 13.500px 0 0 15px; font: bold 17.100px/24px "Noto Sans CJK SC", sans-serif; color: #3c3c3c; white-space: nowrap; }
.clip-small { margin: 5px 0 0 18px; width: 188px; border-top: 1px solid #555; font-size: 5px; line-height: 7px; color: #333; white-space: nowrap; padding-left: 24px; position: relative; padding-top: 4px; }
.clip-small b { position: absolute; left: 0; top: 0; }
.clip-small p:first-of-type { text-indent: 8px; }
.c1 { top: -36.600px; height: 109px; }
.c2 { top: 334px; height: 394px; }
.c3 { top: 740px; height: 178px; }
.c4 { top: 937px; height: 60px; }
.clip-line { margin: 14px 0 0 13.500px; font: bold 10.500px/20px "Noto Sans CJK SC", sans-serif; color: #333; white-space: nowrap; }
.clip-line span { display: inline-block; width: 6px; margin-right: 2px; }

/* reader */
.reader { position: relative; display: flex; flex-direction: column; width: 733px; background: #fdfdfd; box-shadow: -1px 0 3px #c6cacc; }
.strip { height: 19px; background: #f3f3f6; border-bottom: 1px solid #e3e4e7; }
.toolbar { display: flex; height: 41px; padding-left: 18.800px; background: #fdfdfe; }
.toolbar .group { display: flex; height: 39px; align-items: center; }
.toolbar svg { width: 42.400px; height: 20px; }
.toolbar .active { height: 39px; padding: 9px 10px; background: linear-gradient(#3c80d8, #3c80d8) center 36px / 32px 2px no-repeat; }
.toolbar .active .solid { fill: #347cd8; }
.toolbar .pens { margin-left: 5px; padding-left: 6px; background: linear-gradient(#d0d5dc, #d0d5dc) 0 10px / 1px 20px no-repeat; }
.toolbar .views { margin-left: 20.500px; }
.toolbar .views svg { width: 43.600px; }
.tabs { position: relative; display: flex; height: 27px; align-items: center; background: #fbfbfc; font-family: "Noto Sans CJK SC", sans-serif; font-size: 12px; color: #33383d; white-space: nowrap; }
.tab-lines { position: absolute; inset: 0; width: 733px; height: 27px; }
.tab { position: relative; display: flex; align-items: center; gap: 8px; height: 27px; padding-top: 2px; width: 111px; flex: none; }
.tab svg { width: 12px; height: 15px; }
.first { margin-left: 29px; width: 110px; padding: 0 0 4px; color: #111; font-size: 13px; }
.t4 { width: 106px; }
.t5 { width: 92px; gap: 8px; }
.t3 { margin-left: 1px; }
.t5 svg { margin-right: 2px; }
.t6 { width: 86px; margin-left: 0; }
.sort { width: 10px; height: 12px; margin: 0 0 4px 5px; }
.manage { margin: 0 0 4px 31px; color: #4f7db4; font-size: 12.500px; }
.document { position: relative; height: 870px; overflow: hidden; background: #fdfdfd; }
.page { font-family: "Liberation Serif", "Noto Sans CJK SC", serif; font-size: 16px; font-weight: 300; color: #555; }
.page .l { height: 27.680px; line-height: 27.680px; letter-spacing: .5px; word-spacing: -3px; white-space: nowrap; text-align: justify; text-align-last: justify; }
.page .l i { font-size: 17px; }
.p1 { height: 596.400px; padding: 7.400px 54px 0 78.500px; border-bottom: 1px solid #eeeef0; }
.p1 .w506 { width: 508px; }
.page .indent { padding-left: 38px; }
.page .w394 { width: 434px; }
.page .l.formula { height: 47.400px; line-height: 47.400px; }
.page .l.after { height: 28.600px; line-height: 28.600px; }
.page .short { text-align-last: left; letter-spacing: 2.500px; }
.page s { display: inline-block; width: 51px; }
.page .gap-a { width: 64px; }
.page .gap-b { width: 52px; }
.page sub { font-size: 9px; line-height: 0; }
.page .frac { display: inline-flex; flex-direction: column; vertical-align: middle; align-items: stretch; text-align-last: center; line-height: 18px; }
.page .frac i { padding: 0 2px; }
.page .frac i:first-child { border-bottom: 1px solid #777; }
.page h2 { height: 35.500px; margin-bottom: -.5px; padding-left: 36px; font: 500 17.500px/33px "Noto Sans CJK SC", sans-serif; letter-spacing: 2.200px; color: #484848; white-space: nowrap; }
.folio { margin: 18px 0 0 -25px; line-height: 20px; font-size: 16px; letter-spacing: 1px; }
.p2 { padding: 0 83px 0 49.500px; }
.p2 .l { height: 27.300px; line-height: 27.300px; }
.chapter { position: relative; margin: 0 -55px 38px 486px; top: 0; height: 42px; padding: 22px 18px 0; border-bottom: 2px solid #aaa; display: flex; justify-content: flex-end; align-items: center; gap: 8px; font: 500 14.200px/18px "Noto Sans CJK SC", sans-serif; white-space: nowrap; }
.chapter i { width: 10px; height: 10px; background: #bcbcbc; }
.chapter::after { content: ""; position: absolute; left: 134px; top: 42px; width: 1px; height: 28px; background: #8a8a8a; }
.marks { position: absolute; inset: 0; width: 733px; height: 870px; }
.handle { position: absolute; left: 902px; top: 776px; width: 64px; height: 49px; display: grid; place-items: center; border-radius: 50%; background: #ebf0f5; box-shadow: 0 0 5px #e0e5ea; }
.handle svg { width: 36px; height: 14px; fill: none; stroke: #4274ae; stroke-width: 1.900; }
.handle circle { fill: #4e9b9b; stroke: none; }

/* dock */
.dock { position: absolute; left: 474px; top: 1040px; display: flex; gap: 2px; }
.dock-part { display: flex; height: 40px; width: 711px; padding-left: 1.500px; background: #77716c; border-radius: 4px 8px 0 0; }
.dock-part.solo { width: 34px; padding-left: 0; border-radius: 5px 4px 0 0; background: #6b6661; }
.app { width: 30.900px; flex: none; display: flex; flex-direction: column; align-items: center; padding-top: 5px; }
.app::after { content: ""; width: 3px; height: 3px; margin-top: 3px; border-radius: 50%; background: #090909; }
.quiet::after { background: none; }
.app svg { width: 27px; height: 27px; }
.solo .app { width: 34px; }
.rule { width: 1px; height: 28px; margin: 6px 6px 0; background: #4a4643; }
```
